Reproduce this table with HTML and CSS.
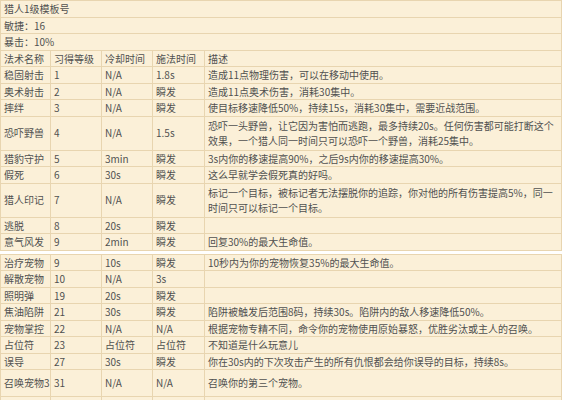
FILE: index.html
```html
<!DOCTYPE html>
<html lang="zh">
<head>
<meta charset="utf-8">
<title>猎人1级模板号</title>
<link rel="stylesheet" href="styles.css">
</head>
<body>
<table class="grid">
  <colgroup><col class="c1"><col class="c2"><col class="c3"><col class="c4"><col class="c5"></colgroup>
  <tr><td colspan="5">猎人1级模板号</td></tr>
  <tr><td colspan="5">敏捷：16</td></tr>
  <tr><td colspan="5">暴击：10%</td></tr>
  <tr><td>法术名称</td><td>习得等级</td><td>冷却时间</td><td>施法时间</td><td>描述</td></tr>
  <tr><td>稳固射击</td><td>1</td><td>N/A</td><td>1.8s</td><td>造成11点物理伤害，可以在移动中使用。</td></tr>
  <tr><td>奥术射击</td><td>2</td><td>N/A</td><td>瞬发</td><td>造成11点奥术伤害，消耗30集中。</td></tr>
  <tr><td>摔绊</td><td>3</td><td>N/A</td><td>瞬发</td><td>使目标移速降低50%，持续15s，消耗30集中，需要近战范围。</td></tr>
  <tr class="tall"><td>恐吓野兽</td><td>4</td><td>N/A</td><td>1.5s</td><td>恐吓一头野兽，让它因为害怕而逃跑，最多持续20s。任何伤害都可能打断这个效果，一个猎人同一时间只可以恐吓一个野兽，消耗25集中。</td></tr>
  <tr><td>猎豹守护</td><td>5</td><td>3min</td><td>瞬发</td><td>3s内你的移速提高90%，之后9s内你的移速提高30%。</td></tr>
  <tr><td>假死</td><td>6</td><td>30s</td><td>瞬发</td><td>这么早就学会假死真的好吗。</td></tr>
  <tr class="tall"><td>猎人印记</td><td>7</td><td>N/A</td><td>瞬发</td><td>标记一个目标，被标记者无法摆脱你的追踪，你对他的所有伤害提高5%，同一时间只可以标记一个目标。</td></tr>
  <tr><td>逃脱</td><td>8</td><td>20s</td><td>瞬发</td><td></td></tr>
  <tr><td>意气风发</td><td>9</td><td>2min</td><td>瞬发</td><td>回复30%的最大生命值。</td></tr>
</table>
<table class="grid second">
  <colgroup><col class="c1"><col class="c2"><col class="c3"><col class="c4"><col class="c5"></colgroup>
  <tr><td>治疗宠物</td><td>9</td><td>10s</td><td>瞬发</td><td>10秒内为你的宠物恢复35%的最大生命值。</td></tr>
  <tr><td>解散宠物</td><td>10</td><td>N/A</td><td>3s</td><td></td></tr>
  <tr><td>照明弹</td><td>19</td><td>20s</td><td>瞬发</td><td></td></tr>
  <tr><td>焦油陷阱</td><td>21</td><td>30s</td><td>瞬发</td><td>陷阱被触发后范围8码，持续30s。陷阱内的敌人移速降低50%。</td></tr>
  <tr><td>宠物掌控</td><td>22</td><td>N/A</td><td>N/A</td><td>根据宠物专精不同，命令你的宠物使用原始暴怒，优胜劣汰或主人的召唤。</td></tr>
  <tr><td>占位符</td><td>23</td><td>占位符</td><td>占位符</td><td>不知道是什么玩意儿</td></tr>
  <tr><td>误导</td><td>27</td><td>30s</td><td>瞬发</td><td>你在30s内的下次攻击产生的所有仇恨都会给你误导的目标，持续8s。</td></tr>
  <tr class="big"><td>召唤宠物3</td><td>31</td><td>N/A</td><td>N/A</td><td>召唤你的第三个宠物。</td></tr>
  <tr><td>&nbsp;</td><td></td><td></td><td></td><td></td></tr>
</table>
</body>
</html>
```

FILE: styles.css
```css
html, body {
  margin: 0;
  padding: 0;
  background: #ffffff;
}

body {
  font-family: "Noto Sans CJK SC", "Noto Sans", sans-serif;
  font-size: 10px;
  color: #505050;
}

.grid {
  width: 562px;
  table-layout: fixed;
  border-collapse: collapse;
  background: #fbf0d8;
}

.grid.second {
  margin-top: 3px;
}

.c1 { width: 50px; }
.c2 { width: 51px; }
.c3 { width: 51px; }
.c4 { width: 52px; }

.grid td {
  border: 1px solid #e8d5b0;
  padding: 0 3px;
  line-height: 15.5px;
  vertical-align: middle;
}

.grid tr.tall td {
  padding-top: 1px;
  padding-bottom: 1px;
}

.grid tr.big td {
  padding-top: 5px;
  padding-bottom: 5px;
  white-space: nowrap;
}
```
